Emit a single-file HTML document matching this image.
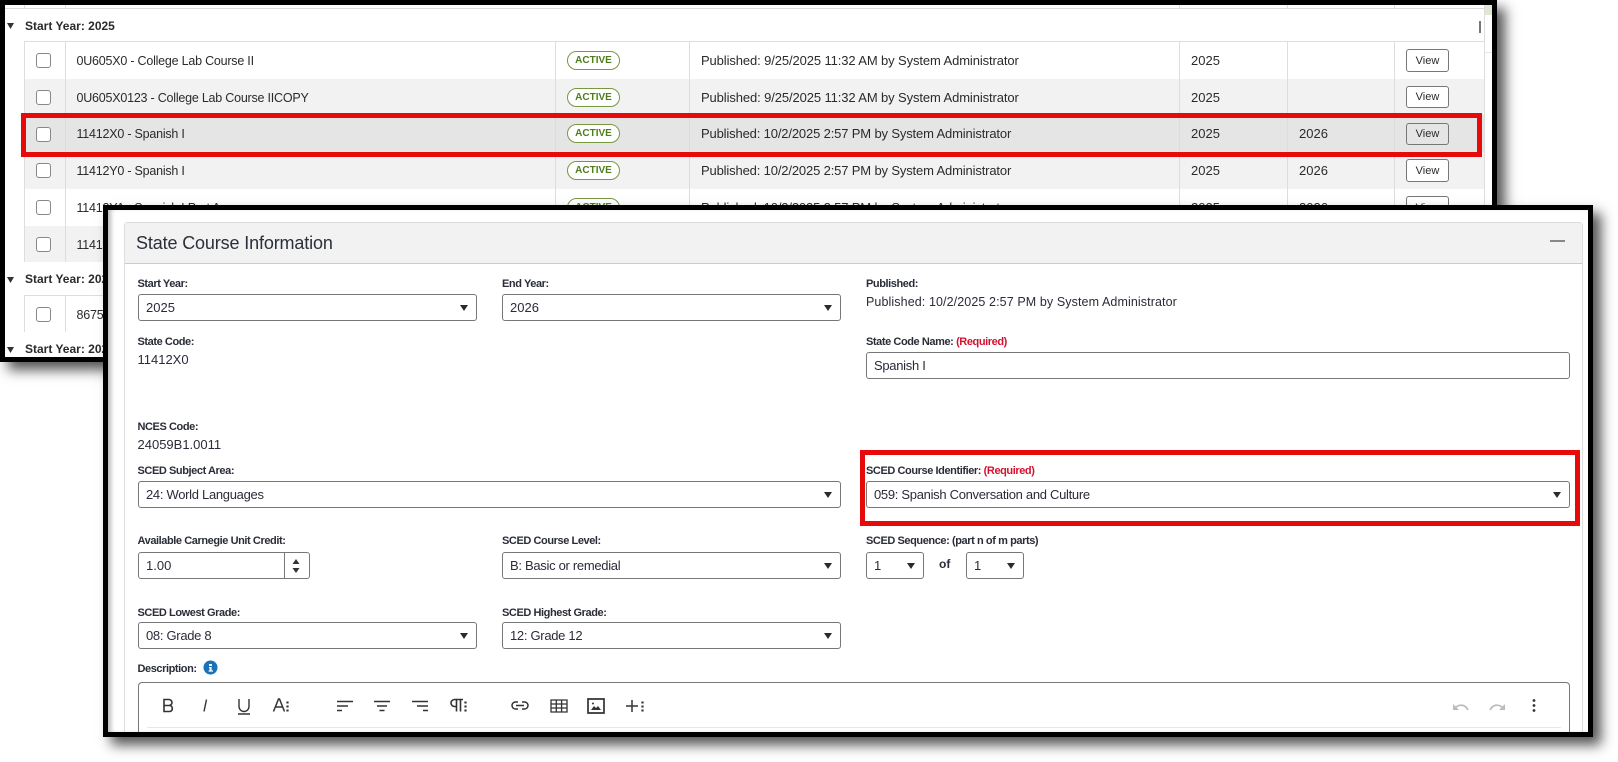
<!DOCTYPE html>
<html><head><meta charset="utf-8"><style>
html,body{margin:0;padding:0;background:#fff}
body{width:1618px;height:762px;position:relative;overflow:hidden;font-family:"Liberation Sans",Arial,sans-serif;color:#2b2b2b}
div,span,svg{position:absolute;box-sizing:border-box}
.t{white-space:nowrap;font-size:13px;line-height:20px;height:20px}
.n{font-size:12.5px;letter-spacing:-.22px}
.p{letter-spacing:-.11px}
.q{letter-spacing:-.15px}
.l{white-space:nowrap;font-size:11px;font-weight:bold;line-height:14px;height:14px;color:#2a2d38;letter-spacing:-.42px}
.r{color:#d3122f}
.w{background:#fff}.g{background:#f2f2f2}
.v{background:#ddd;width:1px}
.h{font-size:12px;font-weight:bold;line-height:16px;height:16px;white-space:nowrap;left:25px;color:#2b2b2b}
.cb{left:36px;width:15px;height:15px;border:1px solid #888;border-radius:3px;background:#fff}
.b{left:567px;width:53px;height:19px;border:1px solid #76983f;border-radius:10px;font-size:10px;font-weight:bold;color:#4f7d1e;text-align:center;line-height:18px;background:#fff}
.btn{left:1406px;width:43px;height:23px;border:1px solid #777;border-radius:3px;background:#fff;font-size:11px;text-align:center;line-height:22px;color:#2b2b2b}
.s{border:1px solid #777;border-radius:3px;background:#fff;height:27px;font-size:13px;line-height:25px;padding-left:7px;white-space:nowrap;color:#2b2b3a;letter-spacing:-.3px}
.s.d{letter-spacing:0}
.s i{position:absolute;right:8px;top:10px;width:0;height:0;border-left:4.5px solid transparent;border-right:4.5px solid transparent;border-top:6px solid #2b2b2b}
</style></head><body>

<!-- window 1 -->
<div style="left:0;top:0;width:1497px;height:362px;background:#fff;border:5px solid #000;box-shadow:8px 8px 12px #555"></div>
<div style="left:5px;top:8px;width:1479px;height:1px;background:#ddd"></div>
<div style="left:1484px;top:5px;width:8px;height:10px;background:#dfe8d4"></div>
<div style="left:1484px;top:52px;width:8px;height:1px;background:#e6e6e6"></div>
<div style="left:1484px;top:5px;width:1px;height:257px;background:#ddd"></div>
<div class="g" style="left:24px;top:79px;width:1460px;height:36px"></div>
<div style="left:24px;top:115px;width:1460px;height:37px;background:#e5e5e5"></div>
<div class="g" style="left:24px;top:152px;width:1460px;height:37px"></div>
<div class="g" style="left:24px;top:226px;width:1460px;height:36px"></div>
<div style="left:24px;top:41px;width:1460px;height:1px;background:#ddd"></div>
<div style="left:24px;top:295px;width:1460px;height:1px;background:#ddd"></div>
<div class="v" style="left:24px;top:41px;height:221px"></div>
<div class="v" style="left:65px;top:41px;height:221px"></div>
<div class="v" style="left:24px;top:295px;height:37px"></div>
<div class="v" style="left:65px;top:295px;height:37px"></div>
<div class="v" style="left:65px;top:5px;height:3px"></div>
<div class="v" style="left:24px;top:5px;height:3px"></div>
<div class="v" style="left:555px;top:41px;height:221px"></div>
<div class="v" style="left:689px;top:41px;height:221px"></div>
<div class="v" style="left:1179px;top:41px;height:221px"></div>
<div class="v" style="left:1287px;top:41px;height:221px"></div>
<div class="v" style="left:1394px;top:41px;height:221px"></div>
<div class="v" style="left:1179px;top:5px;height:3px"></div>
<div class="v" style="left:1287px;top:5px;height:3px"></div>
<div class="v" style="left:1394px;top:5px;height:3px"></div>
<div style="left:1479px;top:21px;width:2px;height:12px;background:#777"></div>

<svg style="left:6px;top:22px" width="9" height="8"><path d="M1 1h7L4.500 7z" fill="#333"/></svg>
<div class="h" style="top:18px">Start Year: 2025</div>
<svg style="left:6px;top:276px" width="9" height="8"><path d="M1 1h7L4.500 7z" fill="#333"/></svg>
<div class="h" style="top:271px">Start Year: 2024</div>
<svg style="left:6px;top:346px" width="9" height="8"><path d="M1 1h7L4.500 7z" fill="#333"/></svg>
<div class="h" style="top:341px">Start Year: 2023</div>

<div class="cb" style="top:53px"></div><div class="cb" style="top:90px"></div><div class="cb" style="top:127px"></div><div class="cb" style="top:163px"></div><div class="cb" style="top:200px"></div><div class="cb" style="top:237px"></div><div class="cb" style="top:307px"></div>

<div class="t n" style="left:76.500px;top:51px">0U605X0 - College Lab Course II</div>
<div class="t n" style="left:76.500px;top:88px">0U605X0123 - College Lab Course IICOPY</div>
<div class="t n" style="left:76.500px;top:124px">11412X0 - Spanish I</div>
<div class="t n" style="left:76.500px;top:161px">11412Y0 - Spanish I</div>
<div class="t n" style="left:76.500px;top:198px">11412YA - Spanish I Part A</div>
<div class="t n" style="left:76.500px;top:235px">11412YB - Spanish I Part B</div>
<div class="t n" style="left:76.500px;top:305px">86750X0 - Course</div>

<div class="b" style="top:51px">ACTIVE</div><div class="b" style="top:88px">ACTIVE</div><div class="b" style="top:124px">ACTIVE</div><div class="b" style="top:161px">ACTIVE</div><div class="b" style="top:198px">ACTIVE</div>

<div class="t p" style="left:701px;top:51px">Published: 9/25/2025 11:32 AM by System Administrator</div>
<div class="t p" style="left:701px;top:88px">Published: 9/25/2025 11:32 AM by System Administrator</div>
<div class="t q" style="left:701px;top:124px">Published: 10/2/2025 2:57 PM by System Administrator</div>
<div class="t q" style="left:701px;top:161px">Published: 10/2/2025 2:57 PM by System Administrator</div>
<div class="t q" style="left:701px;top:198px">Published: 10/2/2025 2:57 PM by System Administrator</div>

<div class="t" style="left:1191px;top:51px">2025</div><div class="t" style="left:1191px;top:88px">2025</div><div class="t" style="left:1191px;top:124px">2025</div><div class="t" style="left:1191px;top:161px">2025</div><div class="t" style="left:1191px;top:198px">2025</div>
<div class="t" style="left:1299px;top:124px">2026</div><div class="t" style="left:1299px;top:161px">2026</div><div class="t" style="left:1299px;top:198px">2026</div>

<div class="btn" style="top:49px">View</div><div class="btn" style="top:86px;height:22px;line-height:21px">View</div>
<div class="btn" style="top:123px;height:22px;line-height:21px;background:#e5e5e5">View</div><div class="btn" style="top:159px">View</div><div class="btn" style="top:196px">View</div>

<!-- red box 1 -->
<div style="left:21px;top:113px;width:1461px;height:44px;border:5px solid #e60a0a"></div>

<!-- window 2 -->
<div style="left:103px;top:205px;width:1490px;height:532px;background:#fff;border:5px solid #000;box-shadow:8px 8px 12px #555,inset 5px 0 5px -2px #bbb"></div>
<div style="left:124px;top:222px;width:1459px;height:510px;border:1px solid #ddd;border-bottom:0;border-radius:3px 3px 0 0"></div>
<div style="left:125px;top:223px;width:1457px;height:41px;background:#f2f2f2;border-bottom:1px solid #ccc"></div>
<div style="left:136px;top:232px;font-size:18px;line-height:22px;white-space:nowrap;color:#2b2f3a;letter-spacing:-.14px">State Course Information</div>
<div style="left:1550px;top:240px;width:15px;height:2px;background:#888"></div>

<div class="l" style="left:137.500px;top:277px">Start Year:</div>
<div class="s d" style="left:138px;top:294px;width:339px">2025<i></i></div>
<div class="l" style="left:502px;top:277px">End Year:</div>
<div class="s d" style="left:502px;top:294px;width:339px">2026<i></i></div>
<div class="l" style="left:866px;top:277px">Published:</div>
<div class="t" style="left:866px;top:292px;font-size:12.500px;letter-spacing:.1px;color:#2b2b3a">Published: 10/2/2025 2:57 PM by System Administrator</div>

<div class="l" style="left:137.500px;top:335px">State Code:</div>
<div class="t" style="left:137.500px;top:350px;color:#2b2b3a">11412X0</div>
<div class="l" style="left:866px;top:335px">State Code Name: <b class="r">(Required)</b></div>
<div class="s" style="left:866px;top:352px;width:704px">Spanish I</div>

<div class="l" style="left:137.500px;top:420px">NCES Code:</div>
<div class="t" style="left:137.500px;top:435px;color:#2b2b3a">24059B1.0011</div>

<div class="l" style="left:137.500px;top:464px">SCED Subject Area:</div>
<div class="s" style="left:138px;top:481px;width:703px">24: World Languages<i></i></div>
<div class="l" style="left:866px;top:464px">SCED Course Identifier: <b class="r">(Required)</b></div>
<div class="s" style="left:866px;top:481px;width:704px">059: Spanish Conversation and Culture<i></i></div>
<div style="left:860px;top:450px;width:720px;height:76px;border:5px solid #e60a0a"></div>

<div class="l" style="left:137.500px;top:534px">Available Carnegie Unit Credit:</div>
<div class="s d" style="left:138px;top:552px;width:172px">1.00</div>
<div style="left:284px;top:552px;width:1px;height:27px;background:#777"></div>
<svg style="left:290px;top:556px" width="12" height="20"><path d="M6 3l3.500 5h-7zM2.500 12h7l-3.500 5z" fill="#333"/></svg>
<div class="l" style="left:502px;top:534px">SCED Course Level:</div>
<div class="s" style="left:502px;top:552px;width:339px">B: Basic or remedial<i></i></div>
<div class="l" style="left:866px;top:534px">SCED Sequence: (part n of m parts)</div>
<div class="s d" style="left:866px;top:552px;width:58px">1<i></i></div>
<div class="l" style="left:939px;top:557px;font-size:12px;letter-spacing:0">of</div>
<div class="s d" style="left:966px;top:552px;width:58px">1<i></i></div>

<div class="l" style="left:137.500px;top:606px">SCED Lowest Grade:</div>
<div class="s" style="left:138px;top:622px;width:339px">08: Grade 8<i></i></div>
<div class="l" style="left:502px;top:606px">SCED Highest Grade:</div>
<div class="s" style="left:502px;top:622px;width:339px">12: Grade 12<i></i></div>

<div class="l" style="left:137.500px;top:662px">Description:</div>
<svg style="left:203px;top:660px" width="15" height="15"><circle cx="7.500" cy="7.500" r="7" fill="#1a72b8"/><path d="M6 4h3v2H6zM6 7h2.600v3.400H10v1.200H5.600v-1.200h1V8.200H6z" fill="#fff"/></svg>

<div style="left:138px;top:682px;width:1432px;height:50px;border:1px solid #777;border-bottom:0;border-radius:4px 4px 0 0"></div>
<div style="left:147px;top:727px;width:1414px;height:1px;background:#e8e8e8"></div>

<svg style="left:150px;top:695px" width="500" height="24" fill="none" stroke="#333" stroke-width="1.500">
<path d="M14 4.500h5a3 3 0 0 1 0 6h-5zM14 10.500h6a3.100 3.100 0 0 1 0 6h-6z" stroke-width="1.600"/>
<path d="M56.500 4.500l-2.500 12" stroke-width="1.400"/>
<path d="M89 4v7.500a5 5 0 0 0 10 0V4M88 19h12" stroke-width="1.400"/>
<path d="M123.500 16.500l5-12.500h1l5 12.500M125.500 12h7"/><path d="M137.500 6.500v2M137.500 10.500v2M137.500 14.500v2" stroke-width="2.200"/>
<path d="M187 6.500h16M187 11h11M187 15.500h5"/>
<path d="M224 6.500h16M227 11h10M229.500 15.500h5"/>
<path d="M262 6.500h16M267 11h11M273 15.500h5"/>
<path d="M308 4.500h-3.500a3.500 3.500 0 0 0 0 7h2.500M306.500 4.500v12M310.500 4.500v12M304 4.500h9" stroke-width="1.600"/><path d="M315.500 6.500v2M315.500 10.500v2M315.500 14.500v2" stroke-width="2.200"/>
<path d="M368 7h-2.500a3.500 3.500 0 0 0 0 7h2.500M372 7h2.500a3.500 3.500 0 0 1 0 7H372M366 10.500h8" stroke-width="1.500"/>
<path d="M401 5h16v12h-16zM401 9h16M401 13h16M406.300 5v12M411.600 5v12" stroke-width="1.300"/>
<path d="M438 4h16v14h-16z" stroke-width="1.700"/><path d="M441 15l3-4 2 2 2-2 3 4z" fill="#333" stroke="none"/><circle cx="443" cy="8.500" r="1" fill="#333" stroke="none"/>
<path d="M476 11h12M482 5v12"/><path d="M492.500 6.500v2M492.500 10.500v2M492.500 14.500v2" stroke-width="2.200"/>
</svg>
<svg style="left:1450px;top:697px" width="95" height="18" fill="none">
<path d="M3 7v6h6z" fill="#bbb"/><path d="M5 11c4-4 10-4 13 2" stroke="#bbb" stroke-width="1.700"/>
<path d="M55 7v6h-6z" fill="#bbb"/><path d="M53 11c-4-4-10-4-13 2" stroke="#bbb" stroke-width="1.700"/>
<circle cx="84" cy="3.500" r="1.400" fill="#333"/><circle cx="84" cy="8.500" r="1.400" fill="#333"/><circle cx="84" cy="13.500" r="1.400" fill="#333"/>
</svg>
</body></html>
